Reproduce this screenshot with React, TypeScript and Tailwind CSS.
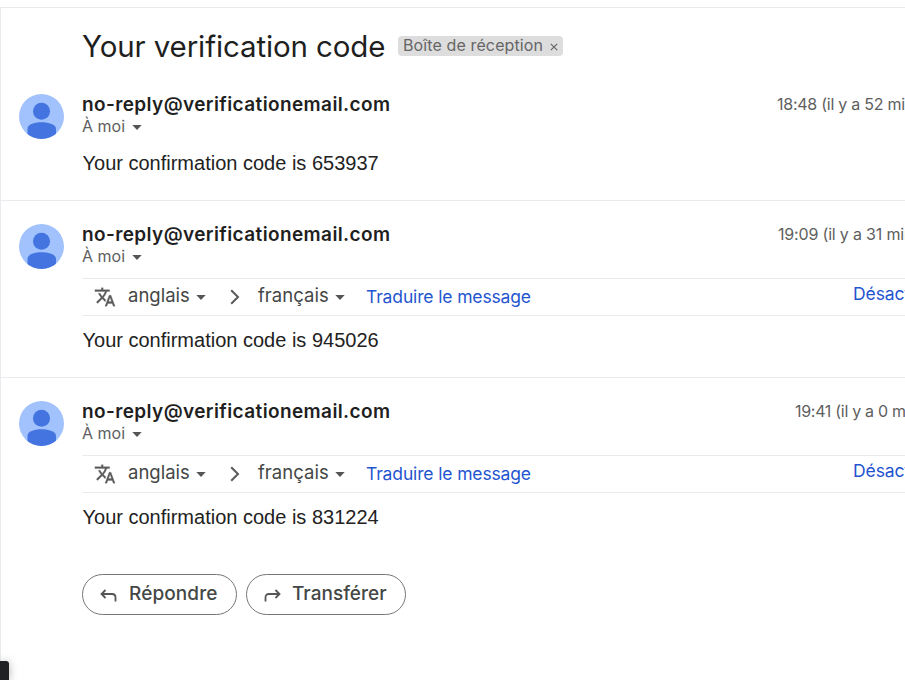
import React from "react";

type Message = { time: string; code: string; translate: boolean };

const messages: Message[] = [
  { time: "18:48 (il y a 52 minutes)", code: "653937", translate: false },
  { time: "19:09 (il y a 31 minutes)", code: "945026", translate: true },
  { time: "19:41 (il y a 0 minute)", code: "831224", translate: true },
];

const timeClasses = [
  "ml-[776px] tracking-[-0.26px]",
  "ml-[777px] tracking-[-0.18px]",
  "ml-[794px] tracking-[-0.3px]",
];

function Caret({ className = "" }: { className?: string }) {
  return (
    <svg className={"shrink-0 " + className} width="10" height="5" viewBox="0 0 10 5">
      <path d="M0.3 0H9.7L5 4.9Z" fill="#555" />
    </svg>
  );
}

function Avatar() {
  return (
    <svg className="ml-[18px] size-[45px] shrink-0" viewBox="0 0 45 45">
      <defs>
        <clipPath id="round">
          <circle cx="22.5" cy="22.5" r="22.5" />
        </clipPath>
      </defs>
      <g clipPath="url(#round)">
        <rect width="45" height="45" fill="#a1c2fd" />
        <circle cx="22.5" cy="17.3" r="8.5" fill="#4374e0" />
        <path d="M8.5 45V35C8.5 30.5 15 28.3 22.5 28.3S37 30.5 37 35V45Z" fill="#4374e0" />
      </g>
    </svg>
  );
}

function TranslateBar() {
  return (
    <div className="ml-[81px] flex h-[38px] items-center border-y border-[#e9ebee] whitespace-nowrap text-[#444746]">
      <svg className="ml-[12px] shrink-0" width="22" height="22" viewBox="0 0 24 24" fill="#5a5a5a" stroke="#5a5a5a" strokeWidth="0.3">
        <path d="M12.87 15.07l-2.54-2.51.03-.03A17.52 17.52 0 0 0 14.07 6H17V4h-7V2H8v2H1v1.99h11.17C11.5 7.92 10.44 9.75 9 11.35 8.07 10.32 7.3 9.19 6.69 8h-2c.73 1.63 1.73 3.17 2.98 4.56l-5.09 5.02L4 19l5-5 3.11 3.11.76-2.04zM18.5 10h-2L12 22h2l1.12-3h4.75L21 22h2l-4.500-12zm-2.620 7l1.620-4.330L19.120 17h-3.240z" />
      </svg>
      <span className="relative -top-px ml-[12px] w-[63px] shrink-0 text-[18.500px] tracking-[0px]">anglais</span>
      <Caret className="ml-[5px]" />
      <svg className="ml-[24px] shrink-0" width="10" height="16" viewBox="0 0 10 16">
        <path d="M1.200 1.200L8 8L1.200 14.800" fill="none" stroke="#5a5a5a" strokeWidth="2" />
      </svg>
      <span className="relative -top-px ml-[18px] w-[72px] shrink-0 text-[18.500px] tracking-[0.02px]">français</span>
      <Caret className="ml-[5px]" />
      <span className="ml-[21px] w-[487px] shrink-0 text-[17.500px] tracking-[-0.14px] text-[#1f55cf]">Traduire le message</span>
      <span className="relative -top-[3px] text-[17.500px] tracking-[-0.1px] text-[#1f55cf]">Désactiver</span>
    </div>
  );
}

export default function App() {
  return (
    <main className="relative h-[680px] w-[905px] overflow-hidden bg-white pt-[7px] font-['Inter',sans-serif]">
      <div className="h-[673px] border-t border-l border-[#e9ebee]">
        <header className="flex h-[63px] items-center pt-[15px] whitespace-nowrap">
          <h1 className="relative -top-px ml-[81px] w-[306px] text-[29.500px] font-normal tracking-[-0.12px] text-[#1f1f1f]">
            Your verification code
          </h1>
          <div className="relative -top-px ml-[10px] flex h-[20px] w-[165px] items-center rounded-[4px] bg-[#ddd] pl-[5px] text-[16px] text-[#666]">
            <span className="relative -top-px w-[142px] tracking-[0.12px]">Boîte de réception</span>
            <svg className="mt-px ml-[5px]" width="8" height="8" viewBox="0 0 8 8">
              <path d="M.8.800L7.200 7.200M7.200.800L.8 7.200" stroke="#666" strokeWidth="1.200" />
            </svg>
          </div>
        </header>
        {messages.map((message, index) => (
          <section
            key={message.code}
            className={
              index === 0
                ? "h-[130px] border-b border-[#e9ebee]"
                : index === 1
                  ? "h-[177px] border-b border-[#e9ebee]"
                  : "h-[196px]"
            }
          >
            <div className="grid h-[77px] pt-[23px] whitespace-nowrap">
              <div className="col-start-1 row-start-1 flex">
                <Avatar />
                <div className="ml-[18px]">
                  <div className="h-[21px] text-[19px] leading-[21px] font-semibold tracking-[0.390px] text-[#1f1f1f]">
                    no-reply@verificationemail.com
                  </div>
                  <div className="flex h-[22px] items-center text-[16px] text-[#5e5e5e]">
                    <span className="w-[44px] tracking-[0px]">À moi</span>
                    <Caret className="mt-[3px] ml-[6px]" />
                  </div>
                </div>
              </div>
              <time className={"col-start-1 row-start-1 text-[16px] leading-[21px] text-[#5e5e5e] " + timeClasses[index]}>
                {message.time}
              </time>
            </div>
            {message.translate && <TranslateBar />}
            <p
              className={
                "ml-[81.500px] font-['Liberation_Sans',sans-serif] text-[20px] leading-[24px] text-[#222] " +
                (message.translate ? "pt-[12px]" : "pt-[3px]")
              }
            >
              Your confirmation code is {message.code}
            </p>
          </section>
        ))}
        <div className="ml-[81px] flex gap-[9px] text-[19px] font-medium text-[#444746]">
          <button className="flex h-[41px] w-[155px] items-center rounded-full border border-[#747775] pl-[17px]">
            <svg className="mt-[2px]" width="17" height="14" viewBox="0 0 17 14" fill="none" stroke="#555" strokeWidth="1.800">
              <path d="M5.500 1L1.500 5L5.500 9M1.500 5H12Q15.500 5 15.500 8.500V12.500" />
            </svg>
            <span className="ml-[12px] tracking-[0.1px]">Répondre</span>
          </button>
          <button className="flex h-[41px] w-[160px] items-center rounded-full border border-[#747775] pl-[17px]">
            <svg className="mt-[2px]" width="17" height="14" viewBox="0 0 17 14" fill="none" stroke="#555" strokeWidth="1.800">
              <path d="M11.500 1L15.500 5L11.500 9M15.500 5H5Q1.500 5 1.500 8.500V12.500" />
            </svg>
            <span className="ml-[11px] tracking-[0.02px]">Transférer</span>
          </button>
        </div>
      </div>
      <div className="absolute bottom-0 left-0 h-[19px] w-[9px] rounded-tr-[3px] bg-[#202124] shadow-[0_1px_10px_rgba(0,0,0,0.3)]" />
    </main>
  );
}
